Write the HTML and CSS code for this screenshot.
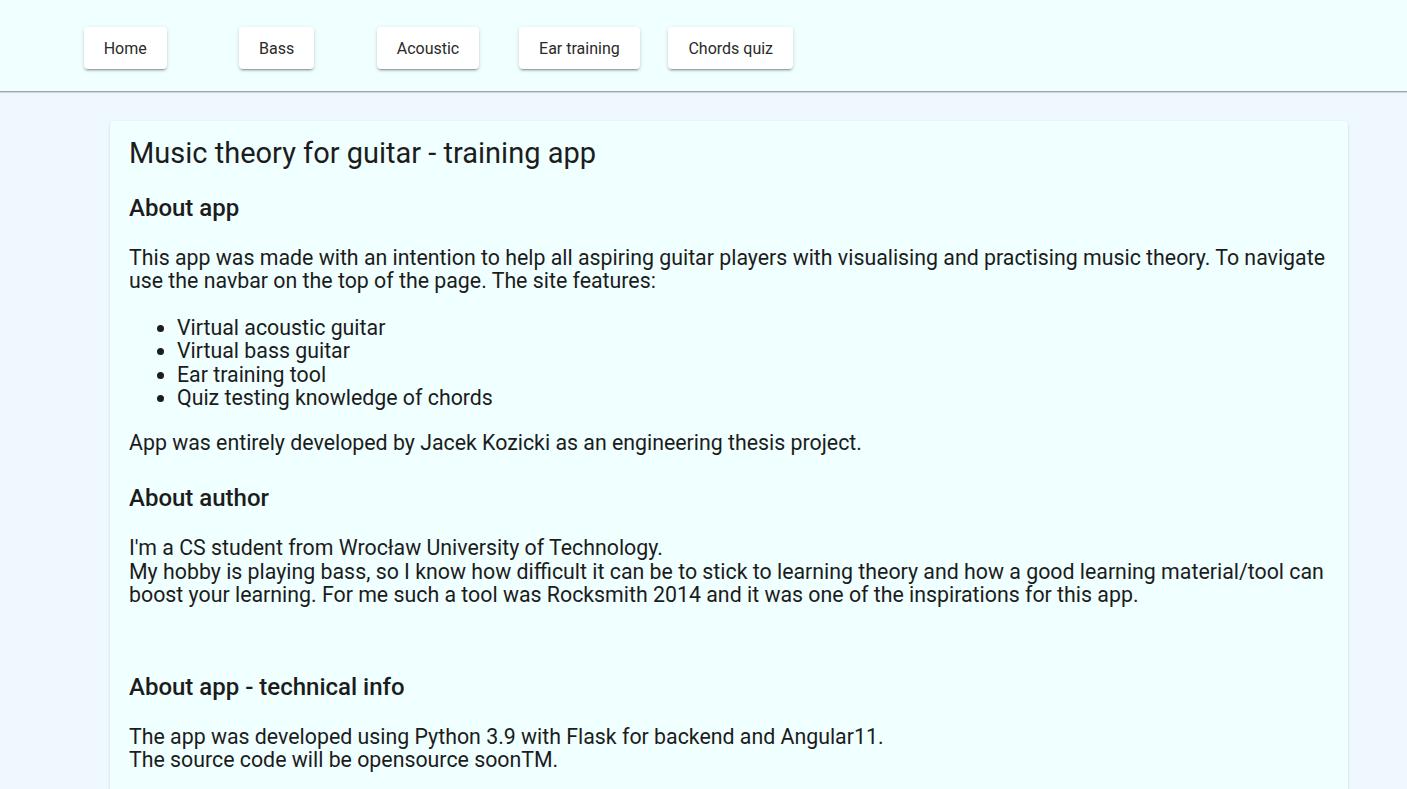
FILE: index.html
```html
<!DOCTYPE html>
<html lang="en">
<head>
<meta charset="utf-8">
<title>Music theory for guitar - training app</title>
<link rel="stylesheet" href="styles.css">
</head>
<body>
<nav class="navbar">
  <div class="nav-items">
    <div class="nav-cell"><button class="nav-btn">Home</button></div>
    <div class="nav-cell"><button class="nav-btn">Bass</button></div>
    <div class="nav-cell"><button class="nav-btn">Acoustic</button></div>
    <div class="nav-cell"><button class="nav-btn">Ear training</button></div>
    <div class="nav-cell"><button class="nav-btn">Chords quiz</button></div>
  </div>
</nav>
<main class="page">
  <div class="card">
    <h1 class="card-title">Music theory for guitar - training app</h1>
    <section class="section">
      <h2 class="section-title">About app</h2>
      <p class="text">This app was made with an intention to help all aspiring guitar players with visualising and practising music theory. To navigate use the navbar on the top of the page. The site features:</p>
      <ul class="features">
        <li>Virtual acoustic guitar</li>
        <li>Virtual bass guitar</li>
        <li>Ear training tool</li>
        <li>Quiz testing knowledge of chords</li>
      </ul>
      <p class="text">App was entirely developed by Jacek Kozicki as an engineering thesis project.</p>
    </section>
    <section class="section">
      <h2 class="section-title">About author</h2>
      <p class="text">I'm a CS student from Wrocław University of Technology.<br>My hobby is playing bass, so I know how difficult it can be to stick to learning theory and how a good learning material/tool can boost your learning. For me such a tool was Rocksmith 2014 and it was one of the inspirations for this app.</p>
    </section>
    <section class="section section-spaced">
      <h2 class="section-title">About app - technical info</h2>
      <p class="text">The app was developed using Python 3.9 with Flask for backend and Angular11.<br>The source code will be opensource soonTM.</p>
    </section>
  </div>
</main>
</body>
</html>
```
FILE: styles.css
```css
html, body {
  margin: 0;
  padding: 0;
}
body {
  background: #f0f8ff;
  font-family: Roboto, "Liberation Sans", sans-serif;
  color: #1c1c1c;
  overflow: hidden;
  height: 789px;
}
.navbar {
  background: #f0ffff;
  height: 91px;
  border-bottom: 1px solid #9da6a6;
  box-shadow: 0 1px 1px rgba(0, 0, 0, 0.12);
}
.nav-items {
  display: grid;
  grid-template-columns: repeat(5, 151.4px);
  padding: 27px 0 0 49.5px;
}
.nav-cell {
  display: flex;
  justify-content: center;
}
.nav-btn {
  height: 42px;
  padding: 0 20px;
  border: none;
  border-radius: 4px;
  background: #ffffff;
  font-family: Roboto, "Liberation Sans", sans-serif;
  font-size: 16px;
  font-weight: 400;
  color: #2a2a2a;
  box-shadow: 0 3px 1px -2px rgba(0, 0, 0, 0.2), 0 2px 2px 0 rgba(0, 0, 0, 0.14), 0 1px 5px 0 rgba(0, 0, 0, 0.12);
  cursor: pointer;
}
.page {
  padding: 29px 59px 0 110px;
}
.card {
  background: #f0ffff;
  border-radius: 4px;
  padding: 15px 19px 40px;
  min-height: 700px;
  box-shadow: 0 2px 1px -1px rgba(0, 0, 0, 0.2), 0 1px 1px 0 rgba(0, 0, 0, 0.14), 0 1px 3px 0 rgba(0, 0, 0, 0.12);
}
.card-title {
  margin: 0 0 24px;
  font-size: 29px;
  font-weight: 400;
  line-height: normal;
}
.section-title {
  margin: 0 0 24px;
  font-size: 24px;
  font-weight: 500;
  line-height: 28px;
}
.section + .section {
  margin-top: 30px;
}
.section.section-spaced {
  margin-top: 66px;
}
.text {
  margin: 0 0 23px;
  font-size: 21.33px;
  line-height: 1.1;
}
.features {
  margin: 0 0 21px;
  padding-left: 48px;
  font-size: 21.33px;
  line-height: 1.1;
}
```
